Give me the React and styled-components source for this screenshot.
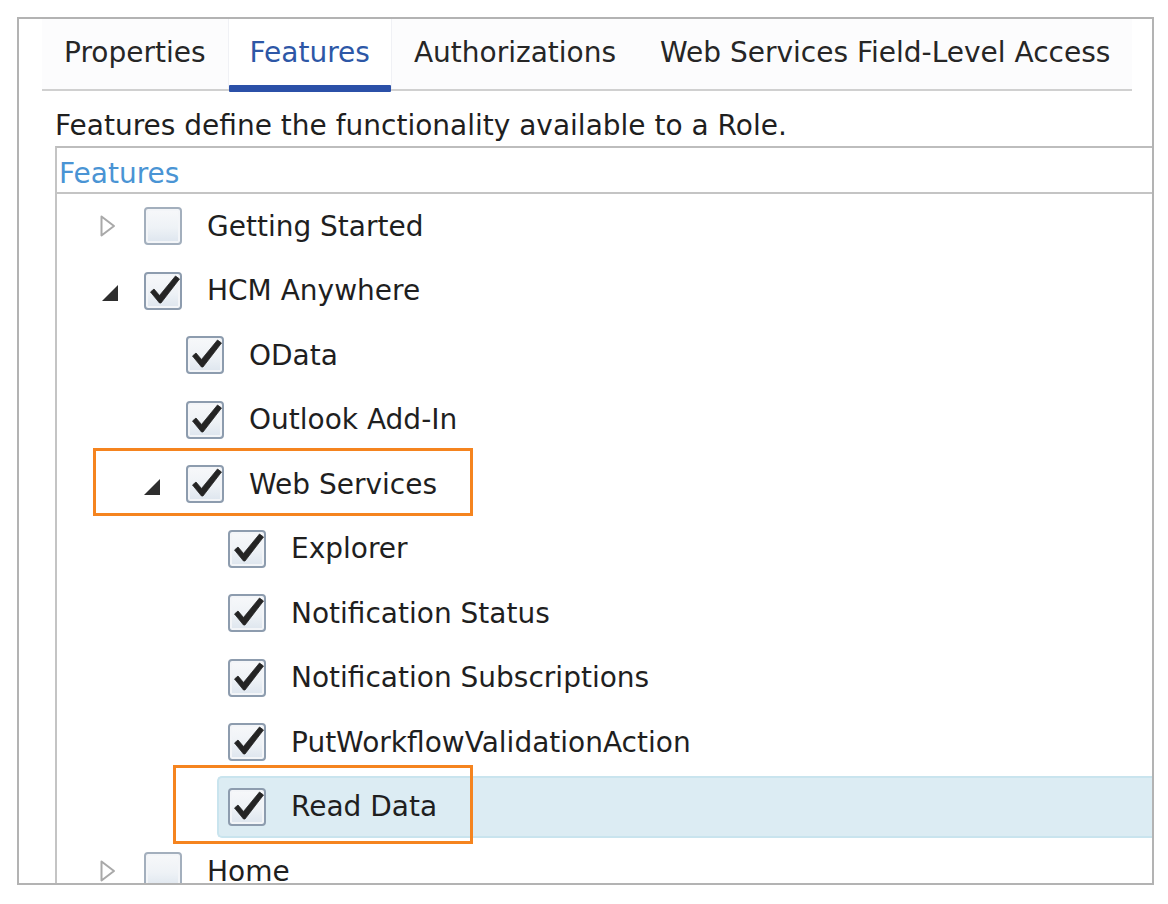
import React from "react";
import styled, { createGlobalStyle } from "styled-components";

const GlobalStyle = createGlobalStyle`
  html, body {
    margin: 0;
    padding: 0;
    background: #ffffff;
  }
  body {
    font-family: "DejaVu Sans", Verdana, sans-serif;
    color: #1f1f1f;
  }
`;

const tabs = [
  { label: "Properties" },
  { label: "Features", active: true },
  { label: "Authorizations" },
  { label: "Web Services Field-Level Access" },
];

const rows = [
  { label: "Getting Started", level: 0, arrow: "collapsed", checked: false },
  { label: "HCM Anywhere", level: 0, arrow: "expanded", checked: true },
  { label: "OData", level: 1, checked: true },
  { label: "Outlook Add-In", level: 1, checked: true },
  { label: "Web Services", level: 1, arrow: "expanded", checked: true },
  { label: "Explorer", level: 2, checked: true },
  { label: "Notification Status", level: 2, checked: true },
  { label: "Notification Subscriptions", level: 2, checked: true },
  { label: "PutWorkflowValidationAction", level: 2, checked: true },
  { label: "Read Data", level: 2, checked: true, selected: true },
  { label: "Home", level: 0, arrow: "collapsed", checked: false },
];

const CollapsedArrow = () => (
  <svg width="18" height="24" viewBox="0 0 18 24">
    <polygon
      points="2.5,2.5 15,12 2.5,21.5"
      fill="#ffffff"
      stroke="#a9a9a9"
      strokeWidth="2"
      strokeLinejoin="round"
    />
  </svg>
);

const ExpandedArrow = () => (
  <svg width="22" height="22" viewBox="0 0 22 22">
    <polygon points="19,3 19,19 3,19" fill="#2e2e2e" />
  </svg>
);

const Tick = () => (
  <svg width="34" height="34" viewBox="0 0 34 34">
    <path
      d="M3.5 19 L7 16 L12.5 22.5 L28.5 3 L32.5 6 L14 30 L12.5 30 Z"
      fill="#242424"
      stroke="#242424"
      strokeWidth="0.8"
      strokeLinejoin="round"
    />
  </svg>
);

const App = () => {
  return (
    <>
      <GlobalStyle />
      <Frame>
        <TabBar>
          {tabs.map((tab) => (
            <Tab key={tab.label} active={tab.active}>
              {tab.label}
            </Tab>
          ))}
        </TabBar>
        <Description>
          Features define the functionality available to a Role.
        </Description>
        <TreeBox>
          <TreeHeader>Features</TreeHeader>
          {rows.map((row) => (
            <Row key={row.label}>
              <Indent level={row.level} />
              <ArrowCell arrow={row.arrow}>
                {row.arrow === "collapsed" && <CollapsedArrow />}
                {row.arrow === "expanded" && <ExpandedArrow />}
              </ArrowCell>
              <RowContent selected={row.selected}>
                <CheckBox checked={row.checked}>
                  {row.checked && <Tick />}
                </CheckBox>
                <Label>{row.label}</Label>
              </RowContent>
            </Row>
          ))}
        </TreeBox>
        <Callout style={{ left: 74, top: 429, width: 380, height: 68 }} />
        <Callout style={{ left: 154, top: 746, width: 300, height: 79 }} />
      </Frame>
    </>
  );
};

export default App;

const Frame = styled.div`
  position: relative;
  box-sizing: border-box;
  margin: 17px 0 0 17px;
  width: 1137px;
  height: 868px;
  border: 2px solid #b3b3b3;
  overflow: hidden;
  display: flex;
  flex-direction: column;
`;

const TabBar = styled.div`
  display: flex;
  margin: 0 20px 0 23px;
  border-bottom: 2px solid #d0d0d0;
`;

const Tab = styled.div`
  position: relative;
  height: 70px;
  padding: 0 21px 4px;
  box-sizing: border-box;
  display: flex;
  align-items: center;
  font-size: 28px;
  color: ${(p) => (p.active ? "#2d57a6" : "#262626")};
  background: ${(p) => (p.active ? "#ffffff" : "#fcfcfd")};
  border-left: 1px solid ${(p) => (p.active ? "#f0f1f5" : "transparent")};
  border-right: 1px solid ${(p) => (p.active ? "#f0f1f5" : "transparent")};
  white-space: nowrap;

  &:last-child {
    flex: 1;
  }

  &::after {
    content: "";
    display: ${(p) => (p.active ? "block" : "none")};
    position: absolute;
    left: 0;
    right: 0;
    bottom: -3px;
    height: 7px;
    background: #2b50a8;
    border-radius: 1px;
  }
`;

const Description = styled.div`
  margin: 15px 0 0 36px;
  height: 40px;
  line-height: 40px;
  font-size: 28px;
  color: #1f1f1f;
  white-space: nowrap;
`;

const TreeBox = styled.div`
  flex: 1;
  margin-left: 36px;
  border-top: 2px solid #bdbdbd;
  border-left: 2px solid #c4c4c4;
  display: flex;
  flex-direction: column;
`;

const TreeHeader = styled.div`
  flex-shrink: 0;
  height: 44px;
  line-height: 52px;
  padding-left: 2px;
  font-size: 28px;
  color: #4a94d4;
  border-bottom: 2px solid #c4c4c4;
`;

const Row = styled.div`
  display: flex;
  align-items: stretch;
  height: 64.5px;
  flex-shrink: 0;
`;

const Indent = styled.div`
  width: ${(p) => 41 + p.level * 42}px;
  flex-shrink: 0;
`;

const ArrowCell = styled.div`
  width: 35px;
  flex-shrink: 0;
  display: flex;
  align-items: center;
  padding-left: ${(p) => (p.arrow === "expanded" ? 1 : 1)}px;
  padding-top: ${(p) => (p.arrow === "expanded" ? 5 : 0)}px;
  box-sizing: border-box;
`;

const RowContent = styled.div`
  flex: 1;
  display: flex;
  align-items: center;
  box-sizing: border-box;
  margin: 1px 0;
  padding-left: ${(p) => (p.selected ? 9 : 11)}px;
  background: ${(p) => (p.selected ? "#dcecf3" : "transparent")};
  border: ${(p) => (p.selected ? "2px solid #c9e4ee" : "none")};
  border-right: none;
  border-radius: 5px 0 0 5px;
`;

const CheckBox = styled.div`
  width: 38px;
  height: 38px;
  box-sizing: border-box;
  flex-shrink: 0;
  border: 2px solid ${(p) => (p.checked ? "#8d9cae" : "#a3afbd")};
  border-radius: 4px;
  background: linear-gradient(180deg, #f7f8fa 0%, #eef2f6 55%, #dde5ee 100%);
  box-shadow: inset 0 0 0 2px #f3f5f8;
  display: flex;
  align-items: center;
  justify-content: center;

  svg {
    margin: -2px -2px 0 0;
  }
`;

const Label = styled.span`
  margin-left: 25px;
  font-size: 28px;
  color: #1f1f1f;
  white-space: nowrap;
`;

const Callout = styled.div`
  position: absolute;
  box-sizing: border-box;
  border: 3.5px solid #f5841f;
  pointer-events: none;
`;
